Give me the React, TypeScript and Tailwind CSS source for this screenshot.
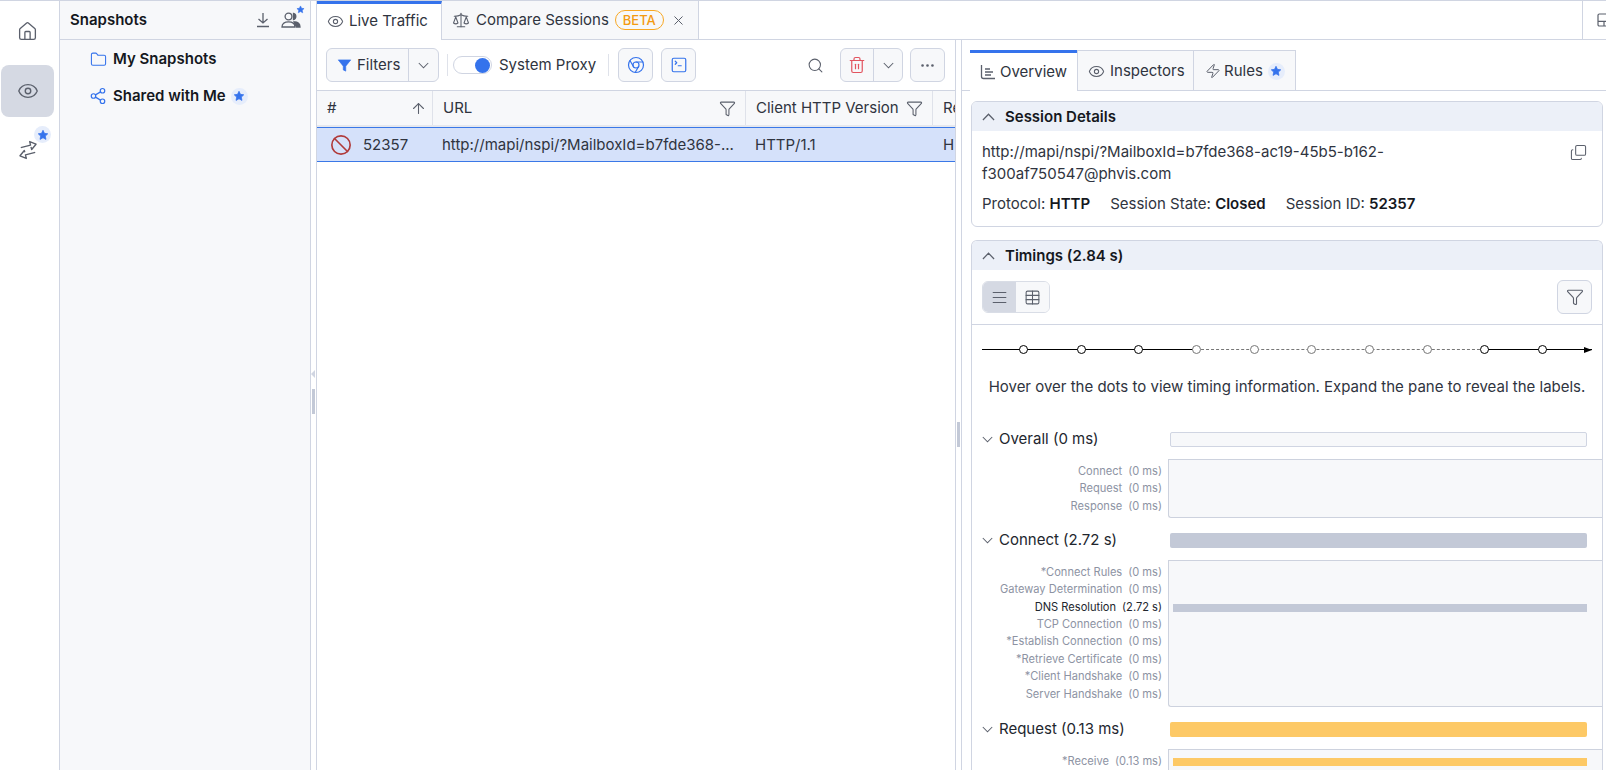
import React from "react";
import { Home, Eye, Folder, Share2, ArrowUp, Scale, X, Chrome, SquareTerminal, Search, Trash2, Ellipsis, Ban, Zap, Copy, AlignJustify, Table, Funnel } from "lucide-react";

const FONT = { fontFamily: "Inter, 'Noto Sans', sans-serif" };

function Star({ size = 12 }: { size?: number }) {
  return (
    <svg width={size} height={size} viewBox="0 0 24 24" fill="#3573ec" stroke="#3573ec" strokeWidth="1.5" strokeLinejoin="round">
      <path d="M12 2.5l2.9 6.2 6.6.9-4.8 4.6 1.2 6.6L12 17.5l-5.9 3.3 1.2-6.6L2.5 9.6l6.6-.9z" />
    </svg>
  );
}

function StarBadge() {
  return (
    <span className="flex h-[17px] w-[17px] items-center justify-center rounded-full bg-[#e6edfb]">
      <Star />
    </span>
  );
}

function Chev({ up = false, w = 11 }: { up?: boolean; w?: number }) {
  return (
    <svg width={w} height={Math.round(w * 0.6)} viewBox="0 0 14 8" fill="none" stroke="#5b606c" strokeWidth="1.3" className="shrink-0">
      <path d={up ? "M1 7.2L7 1l6 6.2" : "M1 .8L7 7l6-6.2"} />
    </svg>
  );
}

function Rail() {
  return (
    <div className="flex w-[60px] shrink-0 flex-col items-start border-r border-[#d0d5e2] bg-white pl-px">
      <div className="flex h-[64px] w-[53px] items-center justify-center pb-[3px]">
        <Home size={21} strokeWidth={1.5} className="text-[#5b606c]" />
      </div>
      <div className="flex h-[52px] w-[53px] items-center justify-center rounded-lg bg-[#d5d9e3]">
        <Eye size={22} strokeWidth={1.5} className="text-[#5b606c]" />
      </div>
      <div className="relative flex h-[60px] w-[53px] items-center justify-center pt-[6px]">
        <svg width="22" height="22" viewBox="0 0 24 24" fill="none" stroke="#5b606c" strokeWidth="1.5" strokeLinejoin="round" className="-rotate-[14deg]">
          <path d="M5 7.500h11V3.500l6 4.500-6 4.500V9.500" />
          <path d="M19 16.500H8v4l-6-4.500 6-4.500v2" />
        </svg>
        <span className="absolute left-[33px] top-[9px]"><StarBadge /></span>
      </div>
    </div>
  );
}

function Sidebar() {
  return (
    <div className="w-[251px] shrink-0 border-r border-[#d0d5e2] bg-[#f7f8fa]">
      <div className="flex h-[39px] items-center justify-between border-b border-[#d0d5e2] pl-[10px] pr-[9px]">
        <span className="text-[15px] font-semibold text-[#15181e]">Snapshots</span>
        <div className="flex items-center gap-[11px]">
          <svg width="14" height="16" viewBox="0 0 14 16" fill="none" stroke="#5b606c" strokeWidth="1.3">
            <path d="M7 1v10M2.500 7L7 11l4.500-4M1 14.500h12" />
          </svg>
          <span className="relative flex">
            <svg width="20" height="16" viewBox="0 0 20 16" fill="none" stroke="#5b606c" strokeWidth="1.3">
              <circle cx="7.500" cy="4.500" r="3.400" />
              <path d="M1 15c0-3.600 2.800-5.200 6.500-5.200S14 11.400 14 15z" />
              <path d="M12.500 1.500a3.100 3.100 0 010 6z" fill="#5b606c" />
              <path d="M13 9.800c3.500 0 6 1.700 6 5.200h-3.500z" fill="#5b606c" />
            </svg>
            <span className="absolute -right-[4px] -top-[7px]"><Star size={9} /></span>
          </span>
        </div>
      </div>
      <div className="flex h-[37px] items-center pl-[30px] pt-[1px]">
        <Folder size={17} strokeWidth={1.5} className="text-[#3573ec]" />
        <span className="ml-[6px] text-[15px] font-semibold text-[#15181e]">My Snapshots</span>
      </div>
      <div className="flex h-[37px] items-center pl-[29px] pt-[1px]">
        <Share2 size={18} strokeWidth={1.6} className="text-[#3573ec]" />
        <span className="ml-[6px] text-[15px] font-semibold text-[#15181e]">Shared with Me</span>
        <span className="ml-[5px]"><StarBadge /></span>
      </div>
    </div>
  );
}

function Splitter({ triangle, handleTop }: { triangle: boolean; handleTop: string }) {
  return (
    <div className={"flex w-[5px] shrink-0 flex-col items-center bg-white " + handleTop}>
      {triangle && <div className="mb-[11px] ml-[-1px] h-0 w-0 border-y-[4px] border-r-[4px] border-y-transparent border-r-[#d0d5e2]" />}
      <div className="h-[25px] w-[3px] bg-[#c3c9d7]" />
    </div>
  );
}

function IconBtn({ children }: { children: React.ReactNode }) {
  return (
    <div className="flex h-[34px] w-[35px] items-center justify-center rounded-md border border-[#d0d5e2] bg-[#f7f8fa]">
      {children}
    </div>
  );
}

function Sep() {
  return <div className="h-[22px] w-px bg-[#dfe2ea]" />;
}

function Toolbar() {
  return (
    <div className="flex h-[51px] shrink-0 items-center border-b border-[#d0d5e2] pl-[9px] pr-[10px]">
      <div className="flex h-[34px] w-[113px] items-center rounded-md border border-[#d0d5e2] bg-[#f7f8fa]">
        <div className="flex h-full w-[82px] items-center border-r border-[#d0d5e2] pl-[10px]">
          <svg width="15" height="15" viewBox="0 0 24 24" fill="#3573ec" stroke="#3573ec" strokeLinejoin="round"><path d="M2 3h20l-8 10v8l-4-2v-6z" /></svg>
          <span className="ml-[5px] pt-[1px] text-[15px] text-[#2f3440]">Filters</span>
        </div>
        <div className="flex flex-1 justify-center"><Chev /></div>
      </div>
      <div className="ml-[8px]"><Sep /></div>
      <div className="ml-[5px] flex h-[18px] w-[39px] items-center justify-end rounded-full border border-[#d0d5e2] bg-white pr-[1px]">
        <span className="h-[15px] w-[15px] rounded-full bg-[#3573ec]" />
      </div>
      <span className="ml-[7px] w-[96px] whitespace-nowrap text-[15px] text-[#2f3440]">System Proxy</span>
      <div className="ml-[13px]"><Sep /></div>
      <div className="ml-[9px]"><IconBtn><Chrome size={18} strokeWidth={1.6} className="text-[#3573ec]" /></IconBtn></div>
      <div className="ml-[8px]"><IconBtn><SquareTerminal size={18} strokeWidth={1.6} className="text-[#3573ec]" /></IconBtn></div>
      <div className="ml-auto"><Search size={17} strokeWidth={1.5} className="text-[#5b606c]" /></div>
      <div className="ml-[16px] flex h-[34px] w-[63px] items-center rounded-md border border-[#d0d5e2] bg-[#f7f8fa]">
        <div className="flex h-full w-[33px] items-center justify-center border-r border-[#d0d5e2]">
          <Trash2 size={18} strokeWidth={1.6} className="text-[#e2545f]" />
        </div>
        <div className="flex flex-1 justify-center"><Chev /></div>
      </div>
      <div className="ml-[7px]"><IconBtn><Ellipsis size={17} strokeWidth={1.8} className="text-[#5b606c]" /></IconBtn></div>
    </div>
  );
}

function TableArea() {
  return (
    <div className="flex-1 overflow-hidden">
      <div className="flex h-[36px] border-b-2 border-[#e6e8ee] bg-[#f7f8fa] text-[15px] text-[#2f3440]">
        <div className="flex w-[116px] shrink-0 items-center justify-between border-r border-[#dfe2ea] pl-[10px] pr-[5px]">
          <span className="pt-[1px]">#</span>
          <ArrowUp size={17} strokeWidth={1.5} className="text-[#5b606c]" />
        </div>
        <div className="flex w-[313px] shrink-0 items-center justify-between border-r border-[#dfe2ea] pl-[10px] pr-[9px]">
          <span className="pt-[1px]">URL</span>
          <Funnel size={17} strokeWidth={1.5} className="text-[#5b606c]" />
        </div>
        <div className="flex w-[187px] shrink-0 items-center justify-between border-r border-[#dfe2ea] pl-[10px] pr-[9px]">
          <span className="whitespace-nowrap pt-[1px]">Client HTTP Version</span>
          <Funnel size={17} strokeWidth={1.5} className="text-[#5b606c]" />
        </div>
        <div className="flex items-center pl-[10px]"><span className="whitespace-nowrap pt-[1px]">Re</span></div>
      </div>
      <div className="flex h-[35px] items-center border-y border-[#3a78e7] bg-[#d5e1fa] pt-[1px] text-[15px] text-[#2f3440]">
        <div className="flex w-[116px] shrink-0 items-center pl-[13px]">
          <Ban size={22} strokeWidth={1.8} className="text-[#b03a3a]" />
          <span className="ml-[11px]">52357</span>
        </div>
        <div className="w-[313px] shrink-0 whitespace-nowrap pl-[9px]">http://mapi/nspi/?MailboxId=b7fde368-...</div>
        <div className="w-[187px] shrink-0 pl-[9px]">HTTP/1.1</div>
        <div className="shrink-0 pl-[10px]">H</div>
      </div>
    </div>
  );
}

function Dot({ dark }: { dark: boolean }) {
  return <span className={"z-10 h-[9px] w-[9px] shrink-0 rounded-full border bg-white " + (dark ? "border-black" : "border-[#777]")} />;
}

function Timeline() {
  const dots = [1, 1, 1, 0, 0, 0, 0, 0, 1, 1];
  return (
    <div className="relative ml-[10px] mr-[10px] mt-[20px] flex h-[9px] items-center justify-between pl-[37px] pr-[45px]">
      <div className="absolute left-0 w-[214px] border-t border-black" />
      <div className="absolute left-[214px] w-[289px] border-t border-dashed border-[#777]" />
      <div className="absolute left-[503px] right-0 border-t border-black" />
      <div className="absolute right-0 h-0 w-0 border-y-[3px] border-l-[8px] border-y-transparent border-l-black" />
      {dots.map((d, i) => <Dot key={i} dark={!!d} />)}
    </div>
  );
}

type Row = { n: string; v: string; dark?: boolean };

function Group({ title, rows, sub, barClass, boxH, mt }: { title: string; rows: Row[]; sub?: React.ReactNode; barClass: string; boxH: string; mt: string }) {
  return (
    <div className={mt}>
      <div className="flex h-[15px] items-center">
        <div className="flex w-[190px] shrink-0 items-center pl-[10px]">
          <Chev />
          <span className="ml-[6px] whitespace-nowrap text-[15px] text-[#22262e]">{title}</span>
        </div>
        <div className={"ml-[8px] mr-[15px] h-[15px] flex-1 rounded-[2px] " + barClass} />
      </div>
      <div className="mt-[12px] flex">
        <div className="w-[196px] shrink-0 pr-[6px] pt-[3.5px]">
          {rows.map((r) => (
            <div key={r.n} className={"flex h-[17.4px] items-center justify-end gap-[6px] whitespace-nowrap text-[11.1px] " + (r.dark ? "text-[#22262e]" : "text-[#8d93a3]")}>
              <span>{r.n}</span>
              <span>{r.v}</span>
            </div>
          ))}
        </div>
        <div className={"flex-1 rounded-bl-[3px] border-y border-l border-[#cdd2de] bg-[#f7f8fa] pl-[4px] pr-[15px] " + boxH}>
          {sub}
        </div>
      </div>
    </div>
  );
}

function RightPane() {
  return (
    <div className="flex min-w-0 flex-1 flex-col overflow-hidden border-l border-[#d0d5e2] bg-white">
      <div className="mt-[10px] flex h-[41px] shrink-0 items-stretch border-b border-[#d0d5e2] pl-[8px]">
        <div className="-mb-px flex w-[107px] items-center border-t-[3px] border-[#3573ec] bg-white pl-[10px] text-[15px] text-[#2f3440]">
          <svg width="16" height="16" viewBox="0 0 16 16" fill="none" stroke="#5b606c" strokeWidth="1.3">
            <path d="M1.500 1v11.500a2 2 0 002 2H15M5 5h5M5 8h8M5 11h6" />
          </svg>
          <span className="ml-[4px]">Overview</span>
        </div>
        <div className="flex w-[117px] items-center border-x border-t border-[#d0d5e2] bg-[#f7f8fa] pl-[10px] pt-[1px] text-[15px] text-[#2f3440]">
          <Eye size={17} strokeWidth={1.5} className="text-[#5b606c]" />
          <span className="ml-[5px]">Inspectors</span>
        </div>
        <div className="flex w-[102px] items-center border-r border-t border-[#d0d5e2] bg-[#f7f8fa] pl-[11px] pt-[1px] text-[15px] text-[#2f3440]">
          <Zap size={16} strokeWidth={1.5} className="text-[#5b606c]" />
          <span className="ml-[3px]">Rules</span>
          <span className="ml-[5px]"><StarBadge /></span>
        </div>
      </div>
      <div className="ml-[9px] mr-[3px] mt-[10px] h-[126px] shrink-0 overflow-hidden rounded-md border border-[#d0d5e2]">
        <div className="flex h-[29px] items-center bg-[#ecf0f8] pl-[10px]">
          <Chev up w={13} />
          <span className="ml-[10px] pt-[1px] text-[15px] font-semibold text-[#15181e]">Session Details</span>
        </div>
        <div className="relative pl-[10px] pr-[40px] pt-[10px] text-[15px] leading-[22px] text-[#2f3440]">
          <div className="w-[440px]">http://mapi/nspi/?MailboxId=b7fde368-ac19-45b5-b162-f300af750547@phvis.com</div>
          <div className="mt-[8px] flex gap-[20px] whitespace-nowrap">
            <span>Protocol: <b className="font-semibold text-[#15181e]">HTTP</b></span>
            <span>Session State: <b className="font-semibold text-[#15181e]">Closed</b></span>
            <span>Session ID: <b className="font-semibold text-[#15181e]">52357</b></span>
          </div>
          <Copy size={17} strokeWidth={1.5} className="absolute right-[15px] top-[13px] -scale-y-100 text-[#5b606c]" />
        </div>
      </div>
      <div className="ml-[9px] mr-[3px] mt-[13px] flex-1 overflow-hidden rounded-t-md border-x border-t border-[#d0d5e2]">
        <div className="flex h-[29px] items-center bg-[#ecf0f8] pl-[10px]">
          <Chev up w={13} />
          <span className="ml-[10px] pt-[1px] text-[15px] font-semibold text-[#15181e]">Timings (2.84 s)</span>
        </div>
        <div className="flex h-[55px] items-center justify-between border-b border-[#d0d5e2] pl-[10px] pr-[10px]">
          <div className="flex h-[32px] w-[68px] overflow-hidden rounded-md border border-[#d9dde6]">
            <div className="flex w-[33px] items-center justify-center bg-[#d5d9e3]"><AlignJustify size={17} strokeWidth={1.5} className="text-[#5b606c]" /></div>
            <div className="flex flex-1 items-center justify-center bg-[#f7f8fa]"><Table size={17} strokeWidth={1.5} className="text-[#5b606c]" /></div>
          </div>
          <IconBtn><Funnel size={18} strokeWidth={1.5} className="text-[#5b606c]" /></IconBtn>
        </div>
        <Timeline />
        <div className="mt-[23px] whitespace-nowrap text-center text-[15px] leading-[20px] text-[#2f3440]">Hover over the dots to view timing information. Expand the pane to reveal the labels.</div>
        <Group
          mt="mt-[35px]"
          title="Overall (0 ms)"
          barClass="border border-[#d0d5e2] bg-[#f7f8fa]"
          boxH="h-[59px]"
          rows={[{ n: "Connect", v: "(0 ms)" }, { n: "Request", v: "(0 ms)" }, { n: "Response", v: "(0 ms)" }]}
        />
        <Group
          mt="mt-[15px]"
          title="Connect (2.72 s)"
          barClass="bg-[#c3c9d7]"
          boxH="h-[147px]"
          sub={<div className="mt-[43px] h-[8px] bg-[#c3c9d7]" />}
          rows={[
            { n: "*Connect Rules", v: "(0 ms)" },
            { n: "Gateway Determination", v: "(0 ms)" },
            { n: "DNS Resolution", v: "(2.72 s)", dark: true },
            { n: "TCP Connection", v: "(0 ms)" },
            { n: "*Establish Connection", v: "(0 ms)" },
            { n: "*Retrieve Certificate", v: "(0 ms)" },
            { n: "*Client Handshake", v: "(0 ms)" },
            { n: "Server Handshake", v: "(0 ms)" },
          ]}
        />
        <Group
          mt="mt-[15px]"
          title="Request (0.13 ms)"
          barClass="bg-[#fdc966]"
          boxH="h-[40px]"
          sub={<div className="mt-[8px] h-[8px] bg-[#fdc966]" />}
          rows={[{ n: "*Receive", v: "(0.13 ms)" }]}
        />
      </div>
    </div>
  );
}

export default function App() {
  return (
    <div style={FONT} className="flex h-[770px] w-[1606px] overflow-hidden border-t border-[#d0d5e2] bg-white">
      <Rail />
      <Sidebar />
      <Splitter triangle handleTop="pt-[369px]" />
      <div className="flex min-w-0 flex-1 flex-col border-l border-[#d0d5e2]">
        <div className="flex h-[39px] shrink-0 items-stretch border-b border-[#d0d5e2]">
          <div className="-mb-px flex w-[125px] items-center border-r border-t-[3px] border-r-[#d0d5e2] border-t-[#3573ec] bg-white pb-[2px] pl-[10px] text-[15px] text-[#2f3440]">
            <Eye size={17} strokeWidth={1.5} className="text-[#5b606c]" />
            <span className="ml-[5px] whitespace-nowrap">Live Traffic</span>
          </div>
          <div className="flex h-full w-[257px] items-center border-r border-[#d0d5e2] bg-[#f7f8fa] pl-[10px] text-[15px] text-[#2f3440]">
            <Scale size={18} strokeWidth={1.4} className="shrink-0 text-[#5b606c]" />
            <span className="ml-[6px] whitespace-nowrap">Compare Sessions</span>
            <span className="ml-[6px] rounded-full border border-[#f8a824] px-[7px] text-[13px] font-medium leading-[18px] text-[#f39a11]">BETA</span>
            <X size={15} strokeWidth={1.6} className="ml-[7px] shrink-0 text-[#5b606c]" />
          </div>
          <div className="flex-1" />
          <div className="flex w-[24px] items-center overflow-hidden border-l border-[#d0d5e2] pl-[13px]">
            <svg width="16" height="16" viewBox="0 0 24 24" fill="none" stroke="#5b606c" strokeWidth="1.8" className="shrink-0">
              <rect x="3" y="3" width="18" height="18" rx="2" />
              <path d="M3 14h18M12 14v7" />
            </svg>
          </div>
        </div>
        <div className="flex min-h-0 flex-1">
          <div className="flex w-[638px] shrink-0 flex-col overflow-hidden">
            <Toolbar />
            <TableArea />
          </div>
          <div className="border-l border-[#d0d5e2]"><Splitter triangle={false} handleTop="h-full pt-[382px]" /></div>
          <RightPane />
        </div>
      </div>
    </div>
  );
}
